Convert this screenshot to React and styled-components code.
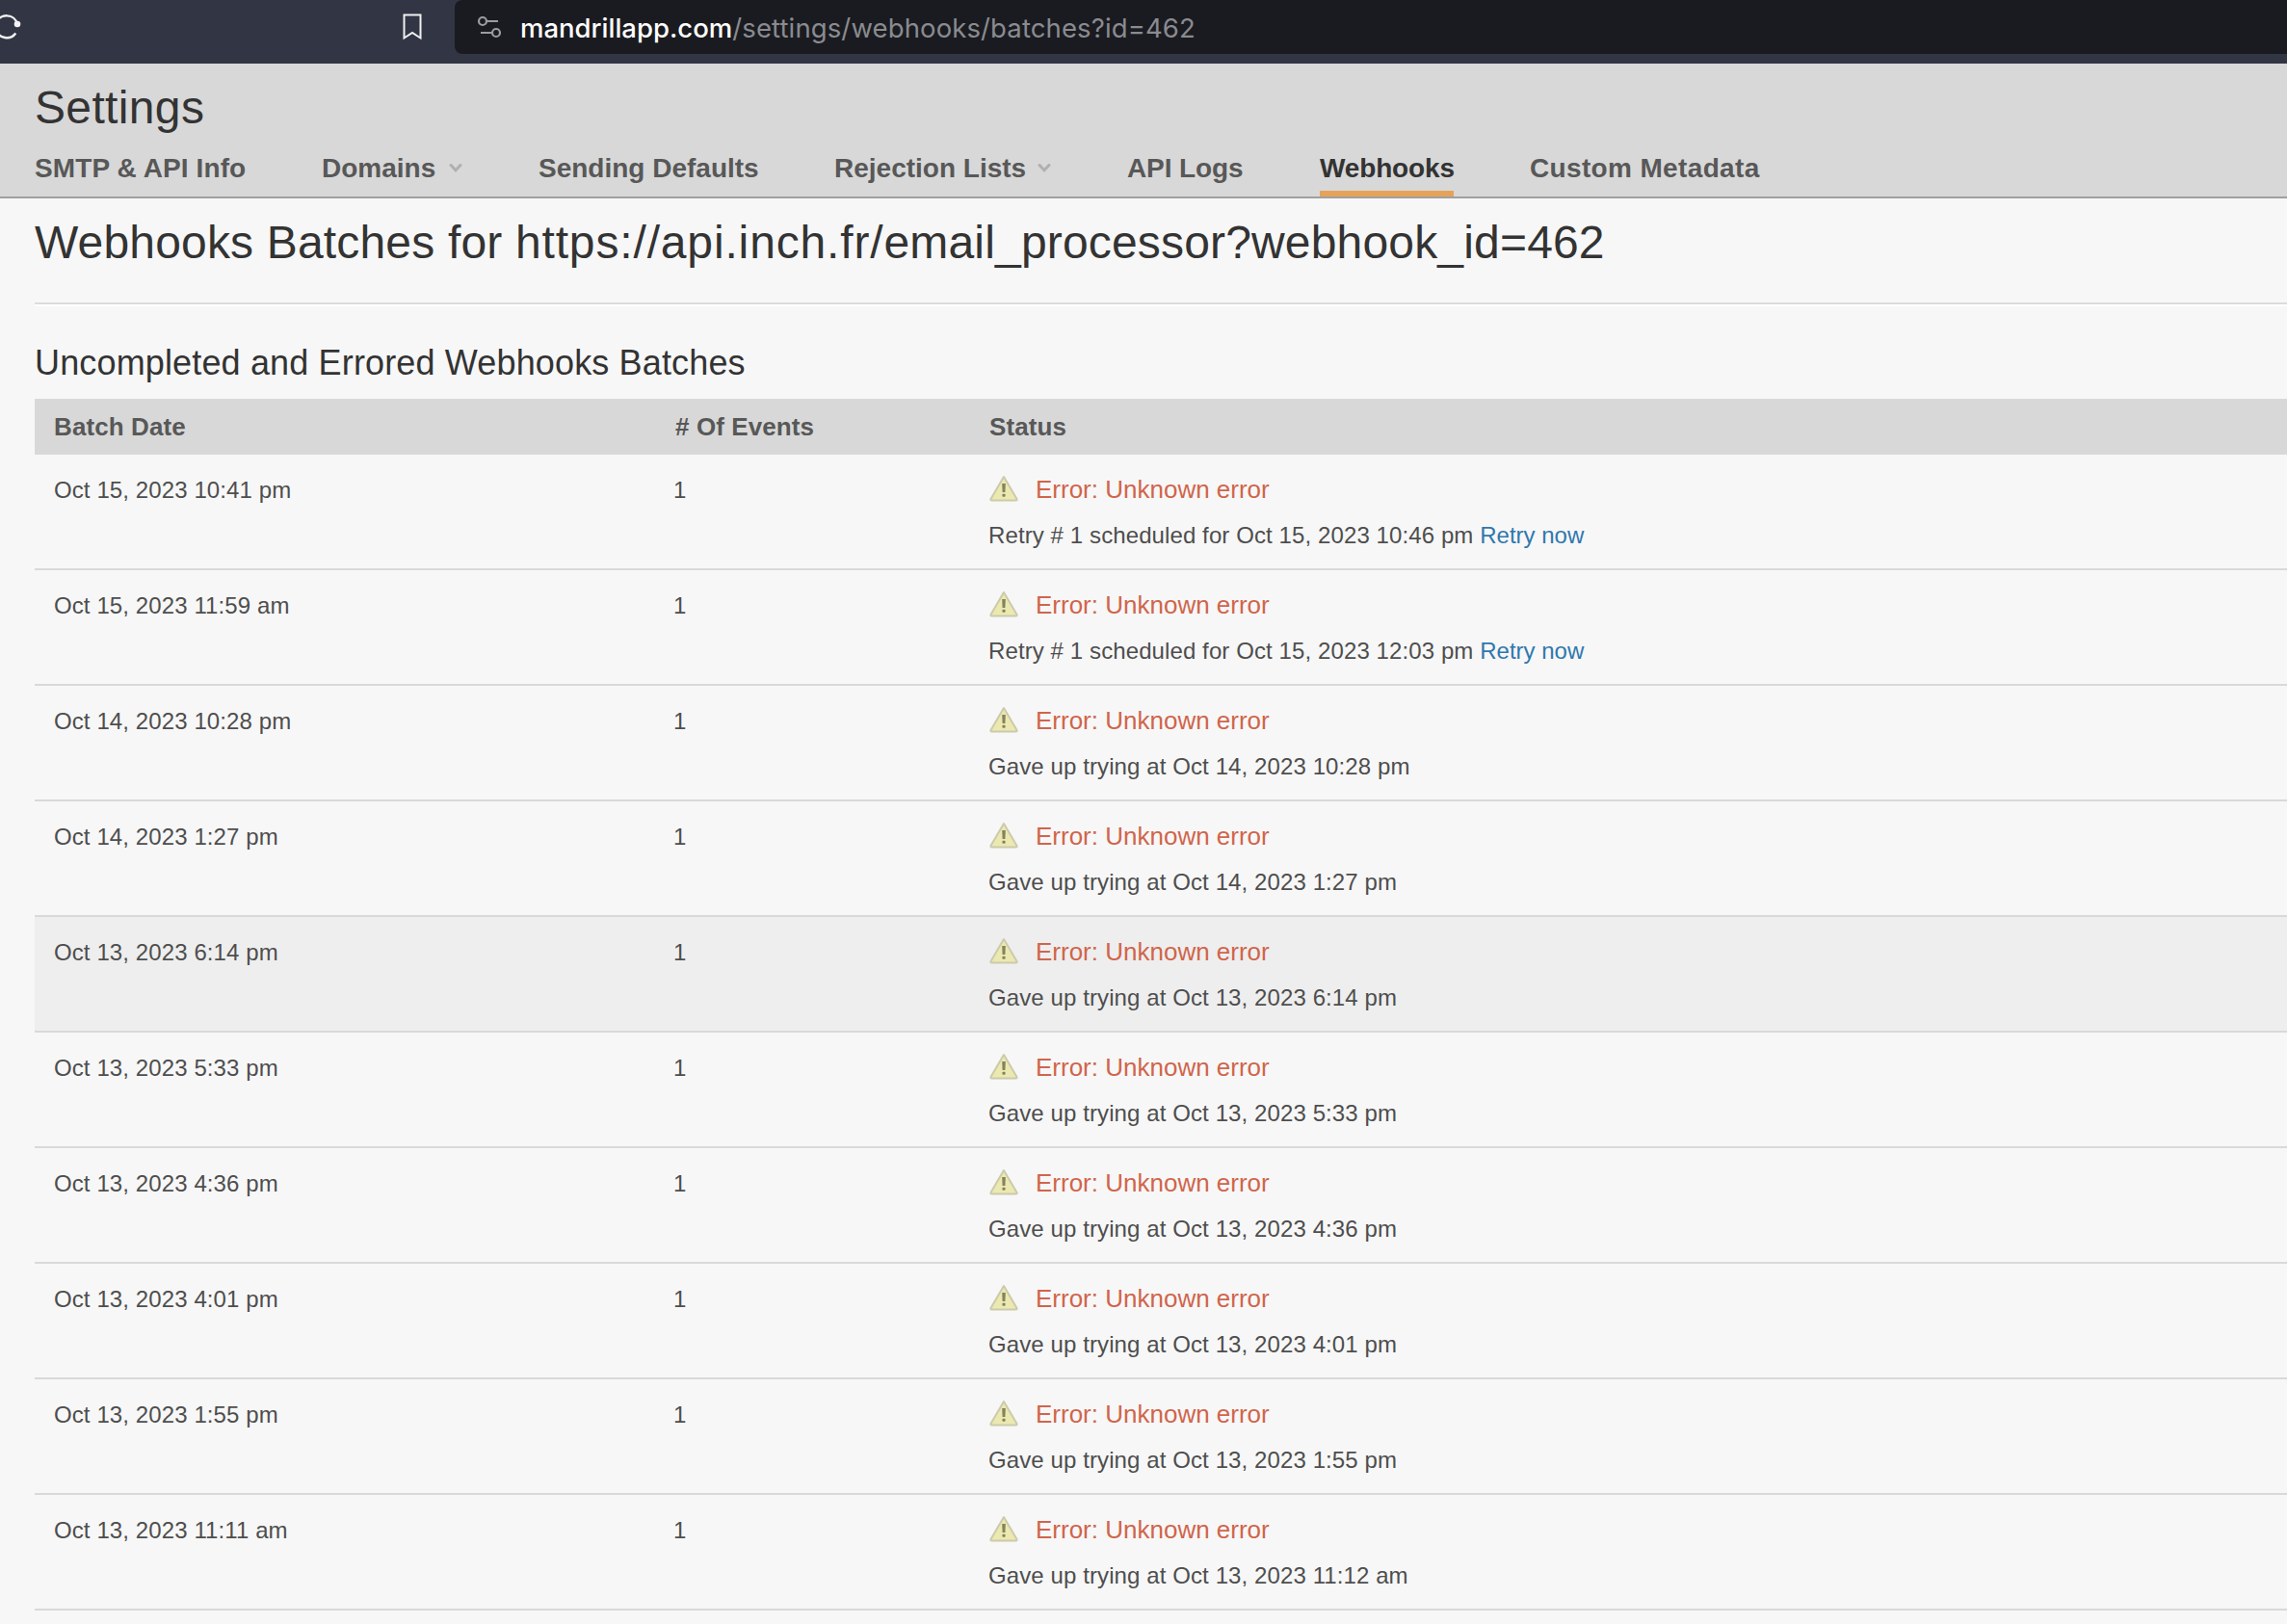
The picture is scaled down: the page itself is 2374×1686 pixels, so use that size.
import React from 'react'
import styled, { createGlobalStyle } from 'styled-components'

const GlobalStyle = createGlobalStyle`
	* {
		box-sizing: border-box;
	}
	body {
		margin: 0;
		background: #f7f7f7;
		font-family: 'Liberation Sans', Arial, sans-serif;
		overflow: hidden;
	}
`

const tabs = [
	{ name: 'SMTP & API Info', width: 219, tracking: 0.1 },
	{ name: 'Domains', menu: true, width: 146 },
	{ name: 'Sending Defaults', width: 228 },
	{ name: 'Rejection Lists', menu: true, width: 225 },
	{ name: 'API Logs', width: 121, tracking: -0.1 },
	{ name: 'Webhooks', active: true, width: 139, tracking: -0.15 },
	{ name: 'Custom Metadata', width: 240, tracking: 0.35 },
]

const batches = [
	{ date: 'Oct 15, 2023 10:41 pm', note: 'Retry # 1 scheduled for Oct 15, 2023 10:46 pm', retry: true },
	{ date: 'Oct 15, 2023 11:59 am', note: 'Retry # 1 scheduled for Oct 15, 2023 12:03 pm', retry: true },
	{ date: 'Oct 14, 2023 10:28 pm', note: 'Gave up trying at Oct 14, 2023 10:28 pm' },
	{ date: 'Oct 14, 2023 1:27 pm', note: 'Gave up trying at Oct 14, 2023 1:27 pm' },
	{ date: 'Oct 13, 2023 6:14 pm', note: 'Gave up trying at Oct 13, 2023 6:14 pm', hovered: true },
	{ date: 'Oct 13, 2023 5:33 pm', note: 'Gave up trying at Oct 13, 2023 5:33 pm' },
	{ date: 'Oct 13, 2023 4:36 pm', note: 'Gave up trying at Oct 13, 2023 4:36 pm' },
	{ date: 'Oct 13, 2023 4:01 pm', note: 'Gave up trying at Oct 13, 2023 4:01 pm' },
	{ date: 'Oct 13, 2023 1:55 pm', note: 'Gave up trying at Oct 13, 2023 1:55 pm' },
	{ date: 'Oct 13, 2023 11:11 am', note: 'Gave up trying at Oct 13, 2023 11:12 am' },
]

const ReloadIcon = () => (
	<svg width='24' height='56' viewBox='0 0 24 56' fill='none'>
		<path d='M-4 24A11.500 11.500 0 0 1 18 25' stroke='#f2f2f2' strokeWidth='2.4' />
		<path d='M-4 31A11.500 11.500 0 0 0 16.300 34.500' stroke='#f2f2f2' strokeWidth='2.4' />
		<circle cx='18' cy='25' r='3.3' fill='#f2f2f2' />
	</svg>
)

const BookmarkIcon = () => (
	<svg width='22' height='30' viewBox='0 0 22 30' fill='none'>
		<path d='M2.500 2.500H19.500V26.500L11 21L2.500 26.500Z' stroke='#f0f0f0' strokeWidth='2' />
	</svg>
)

const TuneIcon = () => (
	<svg width='28' height='28' viewBox='0 0 28 28' fill='none' stroke='#999ca3' strokeWidth='2.2'>
		<circle cx='7' cy='8' r='4' />
		<path d='M11 8H23M5 20H17' />
		<circle cx='21' cy='20' r='4' />
	</svg>
)

const Chevron = () => (
	<svg width='14' height='10' viewBox='0 0 14 10' fill='none'>
		<path d='M1.200 0.500L7 6.800L12.800 0.500' stroke='#b0b0b0' strokeWidth='3' />
	</svg>
)

const WarningIcon = () => (
	<svg width='32' height='28' viewBox='0 0 32 28'>
		<path
			d='M16 2L29.500 25Q30 26.500 28.500 26.500H3.500Q2 26.500 2.500 25Z'
			fill='#ebe9b0'
			stroke='#cccaac'
			strokeWidth='2'
			strokeLinejoin='round'
		/>
		<path d='M14.200 9H17.800L17.400 18H14.600Z' fill='#85835f' />
		<rect x='14.400' y='19.700' width='3.200' height='3' rx='1' fill='#85835f' />
	</svg>
)

const App = () => (
	<Page>
		<GlobalStyle />
		<Toolbar>
			<ReloadIcon />
			<Bookmark>
				<BookmarkIcon />
			</Bookmark>
			<AddressBar>
				<TuneIcon />
				<Url>
					<b>mandrillapp.com</b>/settings/webhooks/batches?id=462
				</Url>
			</AddressBar>
		</Toolbar>
		<Header>
			<PageTitle>Settings</PageTitle>
			<Nav>
				{tabs.map((tab) => (
					<Tab key={tab.name} $active={tab.active} $width={tab.width} $tracking={tab.tracking}>
						{tab.name}
						{tab.menu && <Chevron />}
					</Tab>
				))}
			</Nav>
		</Header>
		<Main>
			<Heading>
				Webhooks Batches for <Host>https://api.inch.fr/</Host>email_processor?webhook_id=462
			</Heading>
			<SubHeading>Uncompleted and Errored Webhooks Batches</SubHeading>
			<TableHead>
				<span>Batch Date</span>
				<span># Of Events</span>
				<span>Status</span>
			</TableHead>
			{batches.map((batch) => (
				<Row key={batch.date} $hovered={batch.hovered}>
					<span>{batch.date}</span>
					<span>1</span>
					<div>
						<ErrorLine>
							<WarningIcon />
							<span>Error: Unknown error</span>
						</ErrorLine>
						<Note>
							{batch.note} {batch.retry && <Retry href='#retry'>Retry now</Retry>}
						</Note>
					</div>
				</Row>
			))}
		</Main>
	</Page>
)

const Page = styled.div`
	width: 2374px;
	height: 1686px;
	overflow: hidden;
	background: #f7f7f7;
`

const Toolbar = styled.div`
	display: flex;
	align-items: flex-start;
	height: 66px;
	background: #323544;
`

const Bookmark = styled.div`
	display: flex;
	margin-left: 393px;
	padding-top: 13px;
	width: 55px;
`

const AddressBar = styled.div`
	display: flex;
	align-items: center;
	flex: 1;
	height: 56px;
	padding-left: 22px;
	border-radius: 8px 0 0 8px;
	background: #1a1b20;
`

const Url = styled.span`
	margin-left: 18px;
	padding-top: 1px;
	color: #8a8b90;
	font-family: Inter, sans-serif;
	font-size: 27.5px;
	letter-spacing: 0.12px;
	line-height: 56px;
	white-space: nowrap;
	b {
		color: #fff;
		font-weight: 500;
		letter-spacing: 0;
	}
`

const Header = styled.header`
	height: 140px;
	padding-left: 36px;
	border-bottom: 2px solid #a0a0a0;
	background: #d8d8d8;
`

const PageTitle = styled.h1`
	margin: 0;
	padding-top: 18px;
	color: #333;
	font-size: 48px;
	font-weight: 400;
	letter-spacing: 0.35px;
	line-height: 56px;
`

const Nav = styled.nav`
	display: flex;
	gap: 79px;
	margin-top: 14px;
`

const Tab = styled.div`
	display: flex;
	align-items: center;
	justify-content: space-between;
	width: ${({ $width }) => $width}px;
	height: 50px;
	padding-bottom: ${({ $active }) => ($active ? 2 : 8)}px;
	border-bottom: ${({ $active }) => ($active ? '6px solid #e5a25a' : 'none')};
	color: ${({ $active }) => ($active ? '#333' : '#585858')};
	font-size: 28px;
	font-weight: 700;
	letter-spacing: ${({ $tracking = 0 }) => $tracking}px;
	white-space: nowrap;
`

const Main = styled.main`
	padding-left: 36px;
`

const Heading = styled.h2`
	height: 110px;
	margin: 0;
	padding-top: 18px;
	border-bottom: 2px solid #dcdcdc;
	box-shadow: 0 2px 0 #fff;
	color: #333;
	font-size: 48px;
	font-weight: 400;
	letter-spacing: 0.17px;
	line-height: 56px;
`

const Host = styled.span`
	letter-spacing: 0.85px;
`

const SubHeading = styled.h3`
	height: 98px;
	margin: 0;
	padding-top: 41px;
	color: #333;
	font-size: 36px;
	font-weight: 400;
	letter-spacing: 0.15px;
	line-height: 40px;
`

const TableHead = styled.div`
	display: grid;
	grid-template-columns: 645px 326px 1fr;
	height: 58px;
	padding-left: 20px;
	background: #d8d8d8;
	color: #585858;
	font-size: 26px;
	font-weight: 700;
	letter-spacing: 0.1px;
	line-height: 58px;
`

const Row = styled.div`
	display: grid;
	grid-template-columns: 643px 327px 1fr;
	height: 120px;
	padding: 22px 0 0 20px;
	border-bottom: 2px solid #d9d9d9;
	background: ${({ $hovered }) => ($hovered ? '#eee' : 'transparent')};
	color: #4e4e4e;
	font-size: 24px;
	letter-spacing: 0.1px;
	line-height: 30px;
`

const ErrorLine = styled.div`
	display: flex;
	gap: 17px;
	height: 30px;
	margin-top: -1px;
	color: #d0654b;
	font-size: 26px;
	letter-spacing: 0;
`

const Note = styled.div`
	margin-top: 18px;
`

const Retry = styled.a`
	color: #2f78ae;
	letter-spacing: 0;
	text-decoration: none;
`

export default App
